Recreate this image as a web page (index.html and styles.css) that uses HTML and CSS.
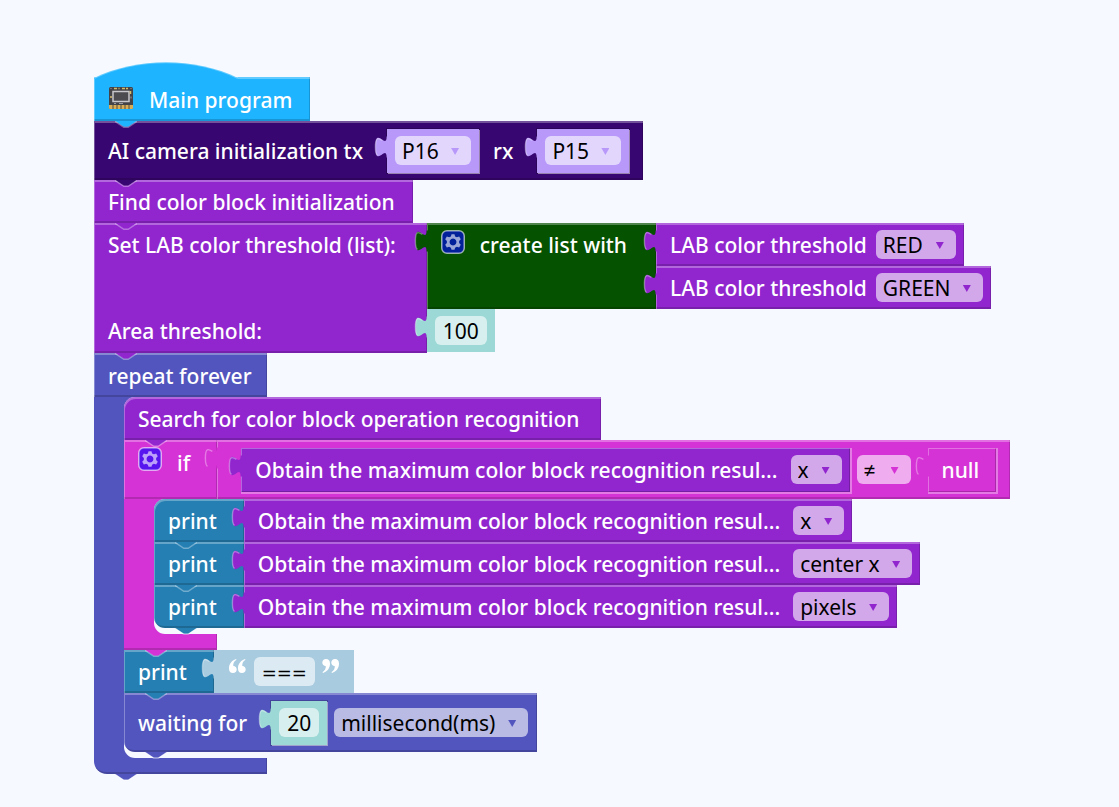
FILE: index.html
```html
<!DOCTYPE html>
<html lang="en">
<head>
<meta charset="utf-8">
<title>Main program</title>
<link rel="stylesheet" href="styles.css">
</head>
<body>
<svg class="defs" aria-hidden="true">
  <symbol id="bump" viewBox="0 0 15 5.5">
    <path class="fill" d="M0,0 L6,4 H9 L15,0 Z"/>
    <path class="edge" d="M0,.3 L6,4.3 H9 L15,.3"/>
  </symbol>
  <symbol id="tab" viewBox="-9 4 10 17">
    <path class="fill" d="M1,5 H0 c0,10 -8,-8 -8,7.500 s8,-2.500 8,7.500 H1 Z"/>
    <path class="edge" d="M-3,7.800 C-6,6 -8,5 -8,12.500 c0,4 .5,5.500 1.500,5.900"/>
  </symbol>
  <symbol id="gear" viewBox="0 0 16 16">
    <rect class="gear-box" x=".5" y=".5" width="15" height="15" rx="3.500"/>
    <path class="gear-mark" fill-rule="evenodd" d="M7,2.800 h2 l.4,1.500 1.200,.6 1.500,-.6 1.100,1.800 -1.100,1.200 v1.400 l1.100,1.200 -1.100,1.800 -1.500,-.5 -1.200,.6 -.4,1.400 h-2 l-.4,-1.400 -1.200,-.6 -1.500,.5 -1.100,-1.800 1.100,-1.200 v-1.400 l-1.100,-1.200 1.100,-1.800 1.500,.6 1.200,-.6 Z M8,5.700 a2.300,2.300 0 1 0 .01,0 Z"/>
  </symbol>
  <symbol id="quote" viewBox="0 0 17 14">
    <path fill="#fff" d="M7,0 C2.500,1.500 0,5 0,9.500 C0,12.500 1.500,14 4,14 C6.200,14 7.700,12.500 7.700,10.400 C7.700,8.300 6.200,7 4.300,7 C4,4.500 5,2.500 7.500,.8 Z M16,0 C11.500,1.500 9,5 9,9.500 C9,12.500 10.500,14 13,14 C15.200,14 16.700,12.500 16.700,10.400 C16.700,8.300 15.200,7 13.300,7 C13,4.500 14,2.500 16.500,.8 Z"/>
  </symbol>
</svg>

<main class="workspace">
  <section class="stack">
    <div class="stmt sky hat-block">
      <svg class="hat" viewBox="0 0 144 17" aria-hidden="true"><path class="fill" d="M0,17 V16 C43,-5 101,-5 144,16 V17 Z"/><path class="hat-edge" d="M0,16 C43,-5 101,-5 144,16"/></svg>
      <svg class="chip" viewBox="0 0 24 22" aria-hidden="true">
        <rect width="24" height="22" rx="1.500" fill="#444448"/>
        <path d="M0,18 h24 v3 q0,1 -1,1 h-22 q-1,0 -1,-1 Z" fill="#d9ad55"/>
        <path d="M4,18 v4 M8,18 v4 M12,18 v4 M16,18 v4 M20,18 v4" stroke="#514b40" stroke-width="1"/>
        <rect x="4" y="4.500" width="16" height="10" fill="#4c4c50" stroke="#c8c8cc" stroke-width="1.500"/>
        <path d="M5,1.500 h3 M9.500,1.500 h1 M13,1.500 h3 M17,1.500 h2 M21.500,4 v3 M2,9 v2" stroke="#d5bd6c" stroke-width="1.500"/>
        <path d="M1.500,1.500 h1 M21.500,1.500 h1 M22,9.500 v2 M5,16.500 h2 M10,16.500 h4" stroke="#9a9aa0" stroke-width="1"/>
      </svg>
      <span class="label">Main program</span>
      <svg class="bump"><use href="#bump"/></svg>
    </div>

    <div class="stmt indigo tall">
      <span class="label">AI camera initialization tx</span>
      <div class="value lilac inset shadow">
        <svg class="tab"><use href="#tab"/></svg>
        <span class="drop"><select aria-label="tx pin"><option>P16</option></select></span>
      </div>
      <span class="label mid">rx</span>
      <div class="value lilac inset shadow">
        <svg class="tab"><use href="#tab"/></svg>
        <span class="drop"><select aria-label="rx pin"><option>P15</option></select></span>
      </div>
      <svg class="bump"><use href="#bump"/></svg>
    </div>

    <div class="stmt purple">
      <span class="label">Find color block initialization</span>
      <svg class="bump"><use href="#bump"/></svg>
    </div>

    <div class="row">
      <div class="stmt purple ext column">
        <span class="label line-two">Set LAB color threshold (list):</span>
        <span class="label">Area threshold:</span>
        <svg class="bump"><use href="#bump"/></svg>
      </div>
      <div class="stack">
        <div class="row">
          <div class="value green ext list">
            <svg class="tab"><use href="#tab"/></svg>
            <button class="gear" aria-label="Edit list items"><svg><use href="#gear"/></svg></button>
            <span class="label">create list with</span>
          </div>
          <div class="stack">
            <div class="value purple">
              <svg class="tab"><use href="#tab"/></svg>
              <span class="label">LAB color threshold</span>
              <span class="drop"><select aria-label="First color"><option>RED</option></select></span>
            </div>
            <div class="value purple">
              <svg class="tab"><use href="#tab"/></svg>
              <span class="label">LAB color threshold</span>
              <span class="drop"><select aria-label="Second color"><option>GREEN</option></select></span>
            </div>
          </div>
        </div>
        <div class="value teal shadow">
          <svg class="tab"><use href="#tab"/></svg>
          <input class="num wide" aria-label="Area threshold" value="100">
        </div>
      </div>
    </div>

    <div class="loop blue round">
      <div class="stmt head"><span class="label">repeat forever</span></div>
      <div class="arm">
        <div class="body">
          <div class="stmt purple first">
            <span class="label long">Search for color block operation recognition</span>
            <svg class="bump"><use href="#bump"/></svg>
          </div>

          <div class="loop pink">
            <div class="row">
              <div class="stmt head if-head">
                <button class="gear" aria-label="Edit branches"><svg><use href="#gear"/></svg></button>
                <span class="label">if</span>
              </div>
              <div class="value pink tall compare">
                <svg class="tab"><use href="#tab"/></svg>
                <div class="value purple inset">
                  <svg class="tab"><use href="#tab"/></svg>
                  <span class="label long">Obtain the maximum color block recognition resul...</span>
                  <span class="drop"><select aria-label="Compared result"><option>x</option></select></span>
                </div>
                <span class="drop operator"><select aria-label="Operator"><option>≠</option></select></span>
                <div class="value pink inset">
                  <svg class="tab"><use href="#tab"/></svg>
                  <span class="label null">null</span>
                </div>
              </div>
            </div>
            <div class="arm">
              <div class="body">
                <div class="row">
                  <div class="stmt cyan ext first">
                    <span class="label">print</span>
                    <svg class="bump"><use href="#bump"/></svg>
                  </div>
                  <div class="value purple">
                    <svg class="tab"><use href="#tab"/></svg>
                    <span class="label long">Obtain the maximum color block recognition resul...</span>
                    <span class="drop"><select aria-label="First printed result"><option>x</option></select></span>
                  </div>
                </div>
                <div class="row">
                  <div class="stmt cyan ext">
                    <span class="label">print</span>
                    <svg class="bump"><use href="#bump"/></svg>
                  </div>
                  <div class="value purple">
                    <svg class="tab"><use href="#tab"/></svg>
                    <span class="label long">Obtain the maximum color block recognition resul...</span>
                    <span class="drop"><select aria-label="Second printed result"><option>center x</option></select></span>
                  </div>
                </div>
                <div class="row">
                  <div class="stmt cyan ext last">
                    <span class="label">print</span>
                    <svg class="bump"><use href="#bump"/></svg>
                  </div>
                  <div class="value purple">
                    <svg class="tab"><use href="#tab"/></svg>
                    <span class="label long">Obtain the maximum color block recognition resul...</span>
                    <span class="drop"><select aria-label="Third printed result"><option>pixels</option></select></span>
                  </div>
                </div>
              </div>
            </div>
            <div class="foot narrow"><svg class="bump"><use href="#bump"/></svg></div>
          </div>

          <div class="row">
            <div class="stmt cyan ext">
              <span class="label">print</span>
              <svg class="bump"><use href="#bump"/></svg>
            </div>
            <div class="value pale shadow text">
              <svg class="tab"><use href="#tab"/></svg>
              <svg class="quote" aria-hidden="true"><use href="#quote"/></svg>
              <input class="str" aria-label="Text" value="===">
              <svg class="quote close" aria-hidden="true"><use href="#quote"/></svg>
            </div>
          </div>

          <div class="stmt blue tall last">
            <span class="label">waiting for</span>
            <div class="value teal inset shadow">
              <svg class="tab"><use href="#tab"/></svg>
              <input class="num" aria-label="Delay" value="20">
            </div>
            <span class="drop after"><select aria-label="Unit"><option>millisecond(ms)</option></select></span>
            <svg class="bump"><use href="#bump"/></svg>
          </div>
        </div>
      </div>
      <div class="foot"><svg class="bump"><use href="#bump"/></svg></div>
    </div>
  </section>
</main>
</body>
</html>
```
FILE: styles.css
```css
* { box-sizing: border-box; }

body {
  --canvas: #f6f9ff;
  margin: 0;
  background: var(--canvas);
  font-family: "Noto Sans", "Open Sans", sans-serif;
  font-size: 21px;
  line-height: 28px;
  color: #fff;
}

.defs { position: absolute; width: 0; height: 0; }

.workspace { padding: 77px 0 30px 94px; white-space: nowrap; }

.stack, .body, .loop { display: flex; flex-direction: column; align-items: flex-start; }
.row { display: flex; align-items: flex-start; }

/* block colours */
.sky { --c: #1eb4ff; }
.indigo { --c: #380670; }
.purple { --c: #9126ce; }
.green { --c: #055200; }
.teal { --c: #9cd8d5; }
.blue { --c: #5255be; }
.pink { --c: #d633d6; }
.cyan { --c: #257fb3; }
.lilac { --c: #b899fa; }
.pale { --c: #a8cbe0; }

/* blocks */
.stmt, .value {
  position: relative;
  display: flex;
  align-items: center;
  min-height: 43px;
  background: var(--c);
  box-shadow: inset 1px 2px 0 rgba(255, 255, 255, .3), inset -1px -2px 0 rgba(0, 0, 0, .17);
}
.stmt { padding: 0 18px 0 14px; }
.value { padding: 0 8px 0 14px; }
.value.shadow { padding: 0 8px; box-shadow: none; }
.tall { min-height: 59px; padding-right: 14px; }
.stmt.ext { padding-right: 27px; }
.label { font-weight: 500; }
.long { padding-right: 4px; }

.value.inset {
  min-height: 44px;
  margin-left: 24px;
  box-shadow: 1px 1px 0 1px rgba(255, 255, 255, .35), inset 1px 1px 0 rgba(255, 255, 255, .3), inset -1px -1px 0 rgba(0, 0, 0, .2);
}
.value.inset.shadow {
  box-shadow: 1px 1px 0 0 rgba(255, 255, 255, .5), 0 0 0 1px rgba(0, 0, 0, .2);
}
.mid { margin-left: 14px; }
.stmt.column { flex-direction: column; align-items: flex-start; align-self: stretch; padding-right: 31px; }
.column .label { line-height: 44px; }
.column .line-two { height: 86px; }
.value.list { align-self: stretch; align-items: flex-start; padding-top: 7px; padding-right: 29px; }
.list .label { padding-top: 1px; }
.value.compare { padding: 0 14px 0 0; }
.null { padding-right: 9px; }
.operator + .inset { margin-left: 17px; }

/* connectors */
.bump, .tab { position: absolute; z-index: 1; pointer-events: none; }
.bump { left: 21px; top: 100%; width: 22px; height: 8px; }
.tab { left: -13px; top: 6px; width: 14px; height: 24px; }
.fill { fill: var(--c); }
.edge { fill: none; stroke: #fff; stroke-opacity: .35; stroke-width: 1; }

/* program start */
.hat-block { min-height: 44px; }
.hat-block .label { padding-top: 2px; }
.hat { position: absolute; left: 0; bottom: calc(100% - 2px); width: 144px; height: 17px; }
.hat-edge { fill: none; stroke: #fff; stroke-opacity: .3; stroke-width: 2; }
.chip { width: 24px; height: 22px; margin: 0 16px 2px 1px; }

/* C-shaped blocks */
.stmt.head { min-height: 44px; padding-right: 15px; }
.head .label { padding-top: 2px; }
.arm {
  padding-left: 30px;
  background: linear-gradient(var(--c), var(--c)) left / 44px 100% no-repeat;
}
.body {
  background: var(--canvas);
  border-radius: 11px 0 0 11px;
  padding-bottom: 6px;
}
.first { border-top-left-radius: 11px; }
.last { border-bottom-left-radius: 11px; }
.foot {
  position: relative;
  width: 173px;
  height: 16px;
  background: var(--c);
  box-shadow: inset -1px -2px 0 rgba(0, 0, 0, .17);
}
.foot.narrow { width: 93px; }
.round > .foot { border-bottom-left-radius: 13px; }
.stmt.if-head { min-height: 59px; align-items: flex-start; padding-top: 7px; padding-right: 27px; }

.gear {
  width: 24px;
  height: 24px;
  margin: 0 15px 0 0;
  padding: 0;
  border: 0;
  background: none;
  cursor: pointer;
}
.gear svg { display: block; width: 24px; height: 24px; }
.gear-box { fill: #00f; fill-opacity: .6; stroke: #fff; stroke-opacity: .6; }
.gear-mark { fill: #fff; fill-opacity: .6; }

/* fields */
select, input {
  height: 29px;
  margin: 0;
  border: 0;
  border-radius: 6px;
  background: rgba(255, 255, 255, .6);
  color: #000;
  font: inherit;
  line-height: 28px;
  appearance: none;
}
select { display: block; padding: 1px 32px 0 7px; }
input { padding: 1px 0 0; text-align: center; }
.num { width: 40px; }
.wide { width: 52px; }
.str { width: 61px; margin: 0 7px 0 8px; padding-top: 2px; font-family: "DejaVu Sans", sans-serif; font-size: 18px; }
.drop { position: relative; margin-left: 9px; }
.drop.operator { margin-left: 7px; }
.operator select { min-width: 54px; font-family: "Open Sans", sans-serif; }
.shadow > .drop { margin-left: 0; }
.drop.after { margin: 0 -5px 0 7px; }
.drop::after {
  content: "";
  position: absolute;
  right: 12px;
  top: 12px;
  width: 8px;
  height: 7px;
  background: var(--c);
  clip-path: polygon(0 0, 100% 0, 50% 100%);
  pointer-events: none;
}
.value.text { padding: 0 15px; }
.quote { width: 17px; height: 14px; margin-bottom: 12px; }
.close { transform: rotate(180deg); }
```
